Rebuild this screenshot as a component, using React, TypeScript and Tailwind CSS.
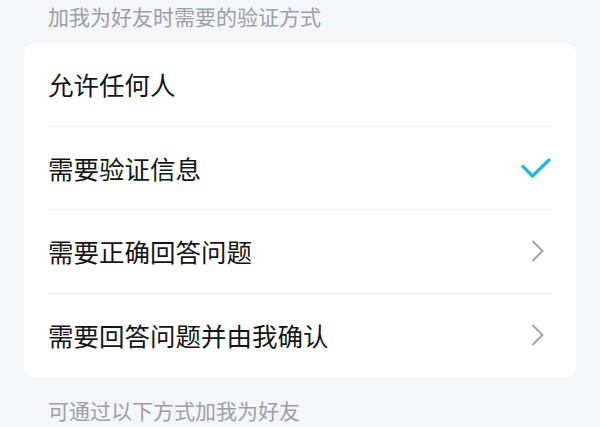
const options = [
  { label: "允许任何人", mark: "none" },
  { label: "需要验证信息", mark: "check" },
  { label: "需要正确回答问题", mark: "arrow" },
  { label: "需要回答问题并由我确认", mark: "arrow" },
]

function CheckMark() {
  return (
    <svg width="30" height="22" viewBox="0 0 30 22" fill="none" className="mr-px">
      <path
        d="M2 9.5L11.5 19L28 3"
        stroke="#1cb8e0"
        strokeWidth="3.2"
        strokeLinecap="round"
        strokeLinejoin="round"
      />
    </svg>
  )
}

function Arrow() {
  return (
    <svg width="14" height="22" viewBox="0 0 14 22" fill="none" className="mr-[7px]">
      <path
        d="M2 1.5L11.5 11L2 20.5"
        stroke="#a2a3aa"
        strokeWidth="2"
        strokeLinecap="round"
        strokeLinejoin="round"
      />
    </svg>
  )
}

export default function App() {
  return (
    <div
      className="h-[427px] w-[600px] overflow-hidden bg-[#f5f6fa] px-6"
      style={{ fontFamily: '"Noto Sans CJK SC", "Noto Sans", sans-serif' }}
    >
      <div className="flex h-[34px] items-center px-6 text-[21px] text-[#9d9ea6]">
        加我为好友时需要的验证方式
      </div>

      <div className="mt-[9px] rounded-xl bg-white px-6">
        {options.map((o, i) => (
          <div
            key={o.label}
            className={
              "flex h-[83.5px] items-center justify-between " +
              (i < options.length - 1 ? "border-b border-[#efeff1]" : "")
            }
          >
            <span className="text-[25.5px] text-[#151515]">{o.label}</span>
            {o.mark === "check" && <CheckMark />}
            {o.mark === "arrow" && <Arrow />}
          </div>
        ))}
      </div>

      <div className="flex h-[68px] items-center px-6 text-[21px] text-[#9d9ea6]">
        可通过以下方式加我为好友
      </div>
    </div>
  )
}
